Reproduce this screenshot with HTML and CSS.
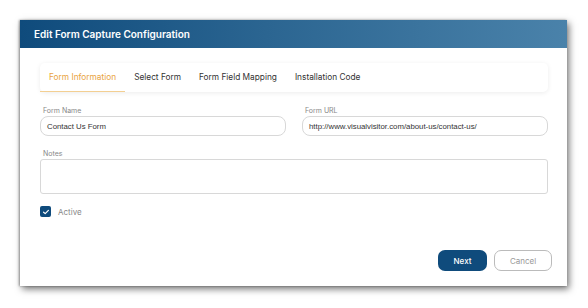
FILE: index.html
```html
<!DOCTYPE html>
<html lang="en">

<head>
  <meta charset="UTF-8">
  <meta name="viewport" content="width=device-width, initial-scale=1.0">
  <title>Edit Form Capture Configuration</title>
  <link rel="stylesheet" href="styles.css">
</head>

<body>
  <div class="modal">
    <div class="modal-header">Edit Form Capture Configuration</div>
    <div class="modal-body">
      <div class="tabs">
        <span class="tab-item active">Form Information</span>
        <span class="tab-item">Select Form</span>
        <span class="tab-item">Form Field Mapping</span>
        <span class="tab-item">Installation Code</span>
      </div>

      <div class="form-row">
        <div class="field">
          <label>Form Name</label>
          <div class="input">Contact Us Form</div>
        </div>
        <div class="field">
          <label>Form URL</label>
          <div class="input">http://www.visualvisitor.com/about-us/contact-us/</div>
        </div>
      </div>

      <div class="field notes">
        <label>Notes</label>
        <div class="textarea"></div>
      </div>

      <div class="check">
        <span class="box">
          <svg width="8" height="8" viewBox="0 0 8 8"><path d="M1.6 4.2 3.2 5.6 6.4 2.4" fill="none" stroke="#fff" stroke-width="1.2" stroke-linecap="round" stroke-linejoin="round"/></svg>
        </span>
        <span>Active</span>
      </div>
    </div>
    <div class="modal-footer">
      <button class="btn btn-primary">Next</button>
      <button class="btn btn-outline">Cancel</button>
    </div>
  </div>
</body>

</html>
```

FILE: styles.css
```css
body {
  margin: 0;
  padding: 20px;
  background: #fff;
  font-family: Inter, "Open Sans", sans-serif;
}

.modal {
  width: 547px;
  height: 266px;
  background: #fff;
  box-shadow: 2px 3px 7px rgba(0, 0, 0, 0.55), -1px 0 2px rgba(0, 0, 0, 0.35);
  display: flex;
  flex-direction: column;
}

.modal-header {
  height: 28px;
  line-height: 28px;
  padding-left: 14px;
  color: #fff;
  font-size: 10px;
  font-weight: 600;
  background: linear-gradient(90deg, #0f4b7c 0%, #2b6591 45%, #4a82aa 100%);
}

.modal-body {
  padding: 15px 19px 0 20px;
  flex: 1;
}

.tabs {
  display: flex;
  height: 29px;
  border-radius: 5px;
  box-shadow: 0 1px 5px rgba(0, 0, 0, 0.08);
  font-size: 8.3px;
  color: #333;
}

.tabs .tab-item {
  padding: 0 9px;
  line-height: 29px;
}

.tabs .tab-item.active {
  color: #e9a43f;
  border-bottom: 1px solid #f3cf92;
}

.form-row {
  display: grid;
  grid-template-columns: 1fr 1fr;
  gap: 16px;
  margin-top: 14px;
}

.field label {
  display: block;
  font-size: 7px;
  color: #888;
  margin: 0 0 1px 3px;
  height: 9px;
}

.input {
  height: 20px;
  line-height: 19px;
  border: 1px solid #d8d8d8;
  border-radius: 8px;
  box-sizing: border-box;
  padding: 0 6px;
  font-family: "Liberation Sans", Arial, sans-serif;
  font-size: 7.8px;
  color: #333;
}

.notes {
  margin-top: 13px;
}

.textarea {
  height: 35px;
  border: 1px solid #d8d8d8;
  border-radius: 3px;
  box-sizing: border-box;
}

.check {
  display: flex;
  align-items: center;
  gap: 7px;
  margin-top: 12px;
  font-size: 8px;
  color: #888;
}

.check .box {
  width: 11px;
  height: 11px;
  border-radius: 2px;
  background: #0f4b7c;
  display: flex;
  align-items: center;
  justify-content: center;
}

.modal-footer {
  display: flex;
  justify-content: flex-end;
  gap: 7px;
  padding: 0 15px 15px 0;
}

.btn {
  height: 21px;
  border-radius: 7px;
  font-family: Inter, "Open Sans", sans-serif;
  font-size: 8px;
  cursor: pointer;
}

.btn-primary {
  width: 49px;
  background: #0f4b7c;
  color: #fff;
  border: none;
  font-weight: 500;
}

.btn-outline {
  width: 58px;
  background: #fff;
  color: #999;
  border: 1px solid #bbb;
}
```
